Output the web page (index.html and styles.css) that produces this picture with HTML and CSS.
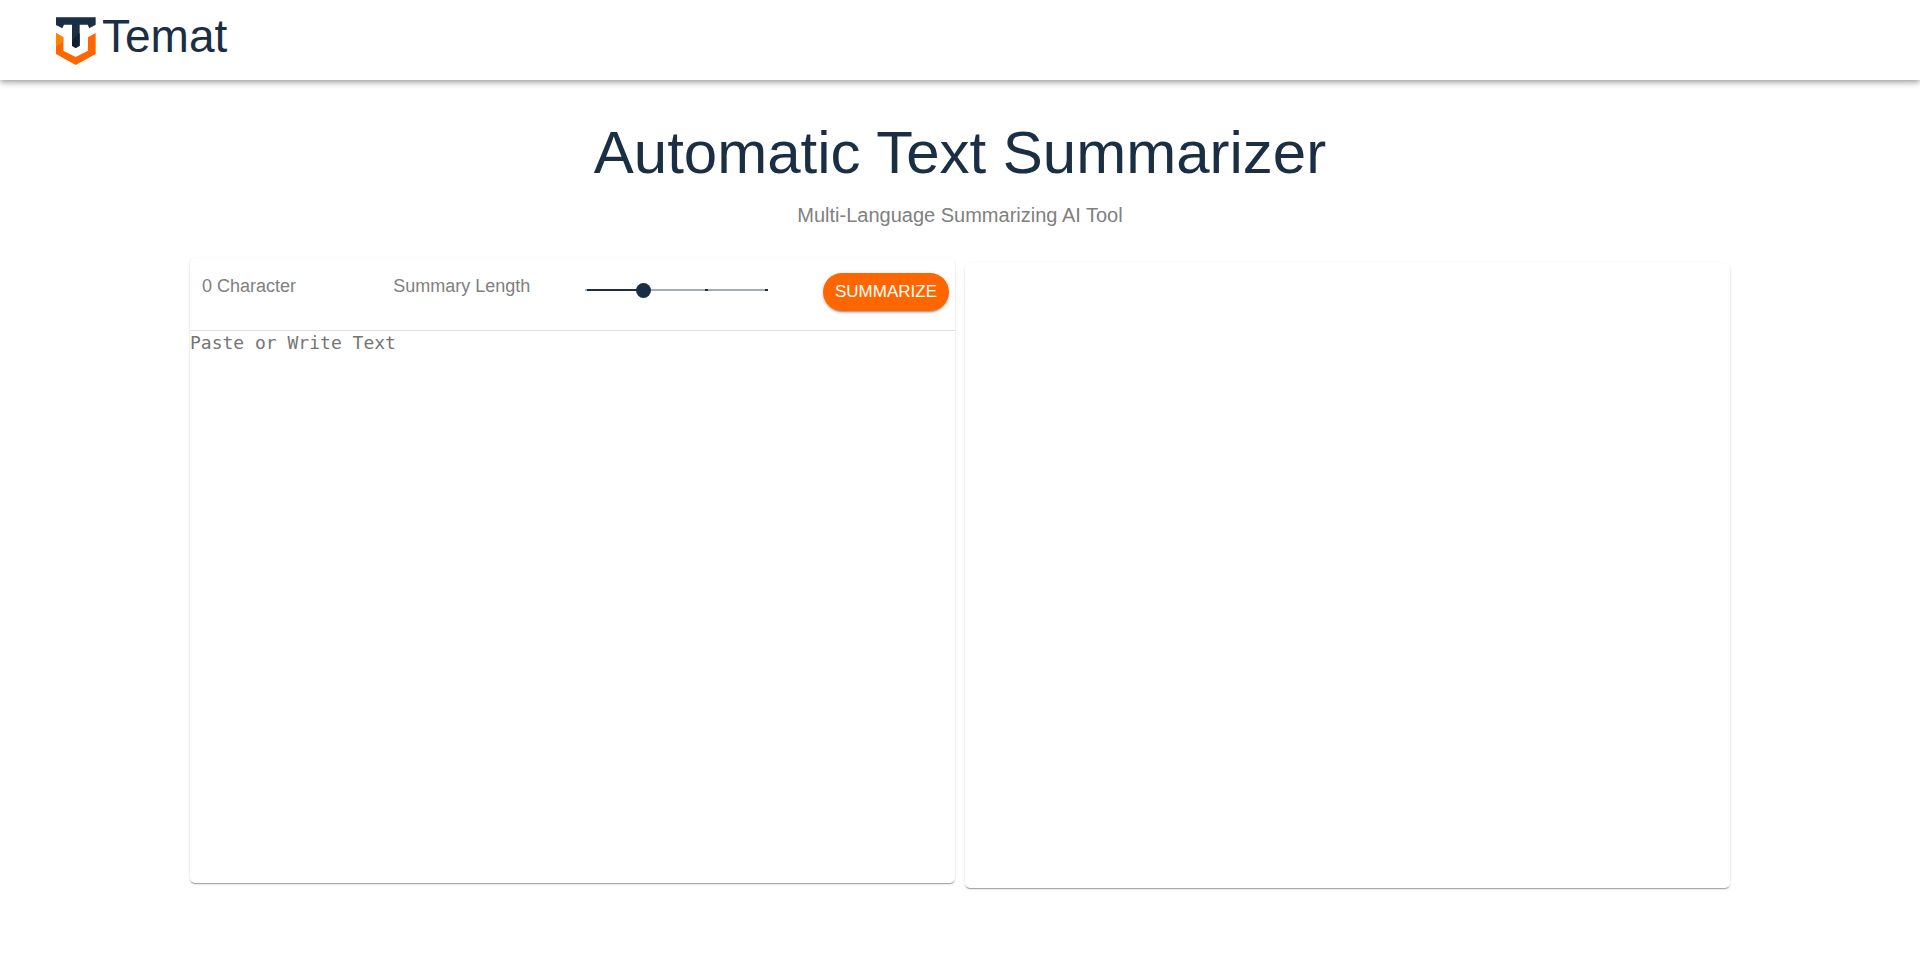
FILE: index.html
```html
<!DOCTYPE html>
<html lang="en">
<head>
<meta charset="utf-8">
<title>Temat</title>
<link rel="stylesheet" href="styles.css">
</head>
<body>
<header class="appbar">
  <svg class="logo" viewBox="48 52 120 144" role="img" aria-label="Temat logo">
    <path class="logo-dark" d="M48 53H167V75L148 86L143 75H119V138L107 145L96 138V75H72L67 86L48 76Z"/>
    <path class="logo-shade" d="M119 100V138L107 145L96 138V123Z"/>
    <path class="logo-orange" d="M48 100L70 113V153L107 172L144 153V113L167 100V163L107 196L48 163Z"/>
    <path class="logo-light" d="M48 100L70 113V127L48 140Z"/>
  </svg>
  <span class="brand">Temat</span>
</header>
<main class="page">
  <h1 class="title">Automatic Text Summarizer</h1>
  <p class="subtitle">Multi-Language Summarizing AI Tool</p>
  <div class="panels">
    <section class="card">
      <div class="toolbar">
        <span class="label">0 Character</span>
        <label class="label" for="length">Summary Length</label>
        <div class="slider-cell"><input class="slider" id="length" type="range" min="0" max="100" value="32"></div>
        <button class="summarize" type="button">SUMMARIZE</button>
      </div>
      <textarea class="source" aria-label="Text to summarize" placeholder="Paste or Write Text"></textarea>
    </section>
    <section class="card result" aria-label="Summary"></section>
  </div>
</main>
</body>
</html>
```
FILE: styles.css
```css
* { box-sizing: border-box; }
body {
  margin: 0;
  background: #fff;
  color: #1a2e44;
  font-family: "Liberation Sans", Arial, sans-serif;
}
.appbar {
  display: flex;
  align-items: flex-start;
  height: 80px;
  padding: 8px 56px;
  gap: 6px;
  background: #fff;
  box-shadow: 0 2px 4px -1px rgba(0, 0, 0, .2), 0 4px 5px 0 rgba(0, 0, 0, .14), 0 1px 10px 0 rgba(0, 0, 0, .12);
}
.logo { width: 40px; height: 48px; margin-top: 9px; }
.logo-dark { fill: #1a2e44; }
.logo-shade { fill: #11202f; }
.logo-orange { fill: #ff6600; }
.logo-light { fill: #ff8303; }
.brand { font-size: 46px; line-height: 56px; }
.page { padding: 37px 24px 64px; }
.title {
  margin: 0;
  font-size: 60px;
  font-weight: 400;
  line-height: 72px;
  text-align: center;
}
.subtitle {
  margin: 10px 0 27px;
  color: #808080;
  font-size: 20px;
  line-height: 32px;
  text-align: center;
}
.panels {
  display: grid;
  grid-template-columns: 1fr 1fr;
  gap: 10px;
  max-width: 1540px;
  margin: 0 auto;
}
.card {
  display: flex;
  flex-direction: column;
  height: 625px;
  border-radius: 5px;
  background: #fff;
  box-shadow: 0 2px 1px -1px rgba(0, 0, 0, .2), 0 1px 1px 0 rgba(0, 0, 0, .14), 0 1px 3px 0 rgba(0, 0, 0, .12);
}
.result { margin-top: 5px; }
.toolbar {
  display: grid;
  grid-template-columns: repeat(4, minmax(0, 1fr));
  align-items: start;
  height: 73px;
  padding-top: 15px;
  border-bottom: 1px solid #dcdfe0;
}
.label {
  padding-left: 12px;
  color: #808080;
  font-size: 18px;
  line-height: 26px;
}
.slider-cell { display: flex; padding-left: 5px; }
.slider {
  flex: none;
  width: 197px;
  height: 34px;
  margin: 0;
  appearance: none;
  background: linear-gradient(90deg, transparent 7px, #a5adb5 7px 9px, #1a2e44 9px 66px, #a5adb5 66px 127px, #1a2e44 127px 130px, #a5adb5 130px 187px, #1a2e44 187px 190px, transparent 190px) center / 100% 2px no-repeat;
}
.slider::-webkit-slider-thumb {
  appearance: none;
  width: 15px;
  height: 15px;
  border-radius: 50%;
  background: #1a2e44;
}
.summarize {
  justify-self: end;
  height: 38px;
  margin-right: 6px;
  padding: 0 12px;
  border: 0;
  border-radius: 19px;
  background: #ff6600;
  color: #fff;
  font: 17px/30px "Liberation Sans", Arial, sans-serif;
  box-shadow: 0 3px 1px -2px rgba(0, 0, 0, .2), 0 2px 2px 0 rgba(0, 0, 0, .14), 0 1px 5px 0 rgba(0, 0, 0, .12);
}
.source {
  flex: 1;
  width: 100%;
  padding: 0;
  border: 0;
  outline: 0;
  resize: none;
  background: transparent;
  color: #1a2e44;
  font: 18px/24px "DejaVu Sans Mono", monospace;
}
.source::placeholder { color: #757575; }
```
